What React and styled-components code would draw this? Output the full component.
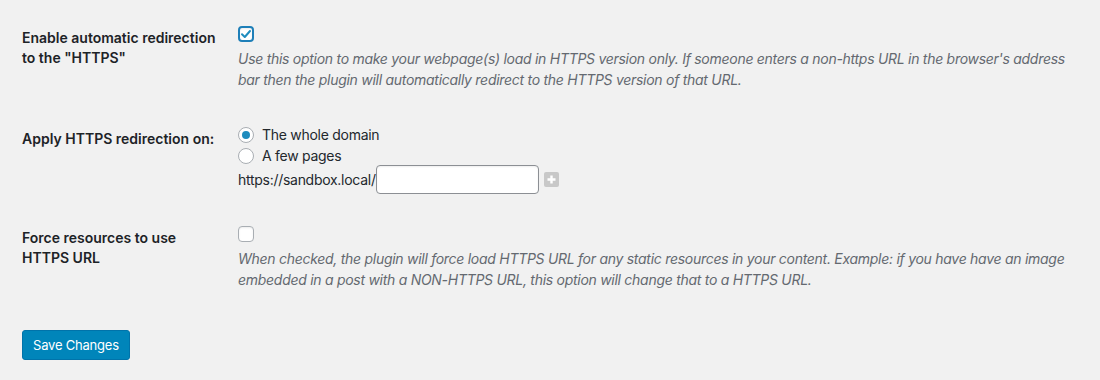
import styled, { createGlobalStyle } from 'styled-components';

const GlobalStyle = createGlobalStyle`
  html, body {
    margin: 0;
    background: #f1f1f1;
  }
  body {
    font-family: Inter, "Liberation Sans", Arial, sans-serif;
    color: #23282d;
    font-size: 14px;
  }
`;

export default function App() {
  return (
    <Page>
      <GlobalStyle />
      <Row>
        <Label>Enable automatic redirection to the "HTTPS"</Label>
        <Field>
          <CheckBox $checked $focused>
            <svg width="12" height="12" viewBox="0 0 12 12">
              <path d="M2 6.2 L4.8 9 L10 3" fill="none" stroke="#1e8cbe" strokeWidth="2" strokeLinecap="round" strokeLinejoin="round" />
            </svg>
          </CheckBox>
          <Description>
            Use this option to make your webpage(s) load in HTTPS version only. If someone enters a non-https URL in the browser's address bar then the plugin will automatically redirect to the HTTPS version of that URL.
          </Description>
        </Field>
      </Row>

      <Row $gap="34px">
        <Label $top="5px">Apply HTTPS redirection on:</Label>
        <Field>
          <RadioRow>
            <Radio $checked />
            The whole domain
          </RadioRow>
          <RadioRow>
            <Radio />
            A few pages
          </RadioRow>
          <UrlRow>
            <span>https://sandbox.local/</span>
            <UrlInput type="text" />
            <AddButton>
              <svg width="9" height="9" viewBox="0 0 9 9">
                <path d="M4.5 0.5 V8.5 M0.5 4.5 H8.5" stroke="#fff" strokeWidth="2.4" />
              </svg>
            </AddButton>
          </UrlRow>
        </Field>
      </Row>

      <Row $gap="32px">
        <Label>Force resources to use HTTPS URL</Label>
        <Field>
          <CheckBox />
          <Description>
            When checked, the plugin will force load HTTPS URL for any static resources in your content. Example: if you have have an image embedded in a post with a NON-HTTPS URL, this option will change that to a HTTPS URL.
          </Description>
        </Field>
      </Row>

      <SaveButton>Save Changes</SaveButton>
    </Page>
  );
}

const Page = styled.div`
  padding: 26px 22px 20px 22px;
  display: flex;
  flex-direction: column;
  align-items: flex-start;
`;

const Row = styled.div`
  display: grid;
  grid-template-columns: 216px 1fr;
  width: 100%;
  margin-top: ${(p) => p.$gap || '0'};
`;

const Label = styled.div`
  font-weight: 600;
  font-size: 14px;
  line-height: 20px;
  padding-top: ${(p) => p.$top || '2px'};
  padding-right: 16px;
  color: #1d2327;
`;

const Field = styled.div`
  display: flex;
  flex-direction: column;
  align-items: flex-start;
  letter-spacing: -0.28px;
`;

const CheckBox = styled.span`
  box-sizing: border-box;
  width: 16px;
  height: 16px;
  border-radius: 4px;
  background: #fff;
  border: ${(p) => (p.$focused ? '2px solid #1e7fb8' : '1px solid #a9aeb3')};
  box-shadow: inset 0 1px 2px rgba(0, 0, 0, 0.08);
  display: flex;
  align-items: center;
  justify-content: center;
`;

const Description = styled.p`
  margin: 6px 0 0 0;
  font-style: italic;
  font-size: 14px;
  line-height: 21px;
  color: #646970;
`;

const RadioRow = styled.label`
  display: flex;
  align-items: center;
  gap: 8px;
  height: 21px;
  font-size: 14px;
`;

const Radio = styled.span`
  box-sizing: border-box;
  width: 16px;
  height: 16px;
  border-radius: 50%;
  border: 1px solid #a9aeb3;
  background: #fff;
  position: relative;
  &::after {
    content: '';
    display: ${(p) => (p.$checked ? 'block' : 'none')};
    position: absolute;
    left: 3px;
    top: 3px;
    width: 8px;
    height: 8px;
    border-radius: 50%;
    background: #1e8cbe;
  }
`;

const UrlRow = styled.div`
  display: flex;
  align-items: center;
  margin-top: -1px;
  font-size: 14px;
`;

const UrlInput = styled.input`
  box-sizing: border-box;
  width: 163px;
  height: 29px;
  margin: 0;
  border: 1px solid #8c8f94;
  border-radius: 4px;
  background: #fff;
  box-shadow: inset 0 1px 2px rgba(0, 0, 0, 0.07);
`;

const AddButton = styled.span`
  width: 15px;
  height: 15px;
  margin-left: 5px;
  border-radius: 2px;
  background: #c8c8c8;
  display: flex;
  align-items: center;
  justify-content: center;
`;

const SaveButton = styled.button`
  margin-top: 40px;
  height: 30px;
  padding: 0 10px;
  background: #0085ba;
  border: 1px solid #0073aa;
  border-radius: 3px;
  color: #fff;
  font-family: Inter, "Liberation Sans", Arial, sans-serif;
  font-size: 13px;
  letter-spacing: -0.2px;
  cursor: pointer;
`;
